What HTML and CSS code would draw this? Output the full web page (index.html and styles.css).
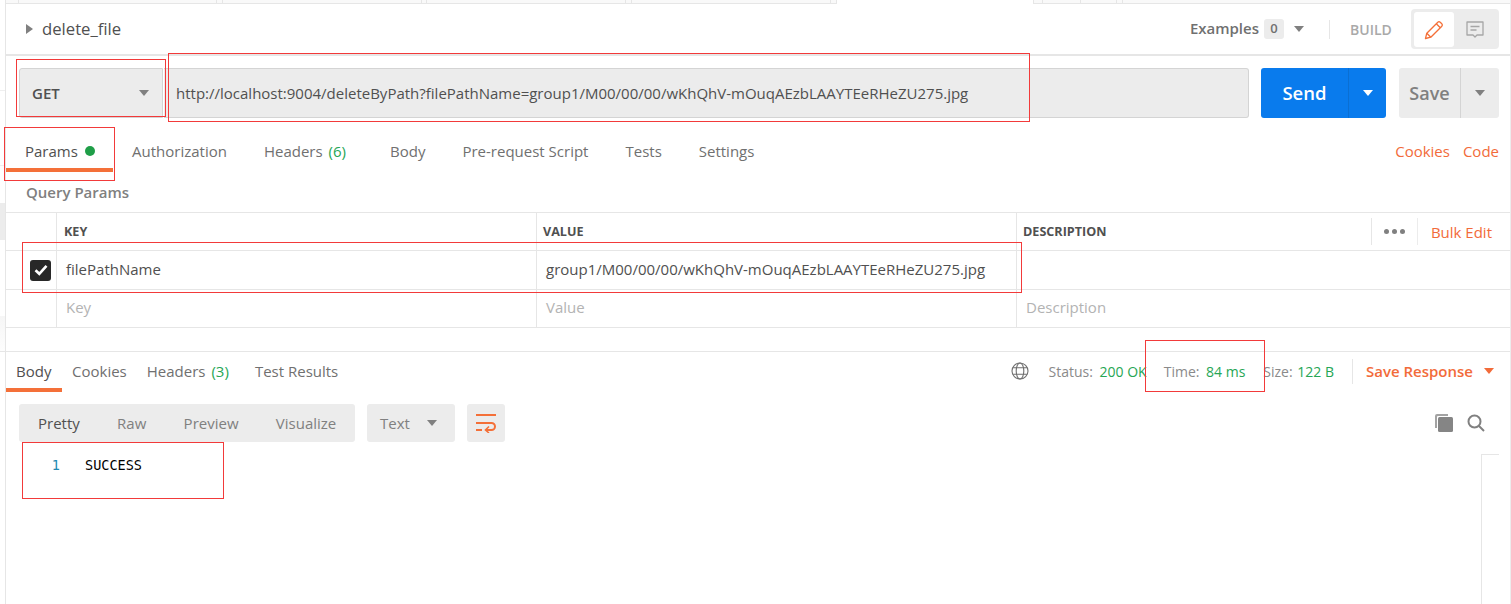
FILE: index.html
```html
<!DOCTYPE html>
<html lang="en">
<head>
<meta charset="utf-8">
<title>delete_file</title>
<link rel="stylesheet" href="styles.css">
</head>
<body>
<div class="app">
  <aside class="rail">
    <div class="rb rb1"></div><div class="rb rb2"></div><div class="rb rb3"></div><div class="rb rb4"></div><div class="rb rb5"></div><div class="rb rb6"></div>
  </aside>
  <main class="main">
    <div class="tabstrip">
      <span class="st"></span><span class="st"></span><span class="st"></span><span class="st"></span><span class="st"></span><span class="st"></span><span class="st"></span><span class="st"></span><span class="st"></span><span class="st st-active"></span><span class="st"></span><span class="st"></span><span class="st"></span><span class="st"></span><span class="st st-end"></span>
    </div>
    <header class="titlebar">
      <div class="title"><svg class="tri-r" width="7" height="10" viewBox="0 0 7 10"><path d="M0 0l7 5-7 5z"/></svg><span class="title-text">delete_file</span></div>
      <div class="title-right">
        <span class="examples">Examples</span><span class="count">0</span>
        <svg class="tri" width="10" height="6" viewBox="0 0 10 6"><path d="M0 0h10L5 6z"/></svg>
        <span class="vsep"></span>
        <span class="build">BUILD</span>
        <div class="modes">
          <span class="mode on"><svg width="20" height="20" viewBox="0 0 20 20" fill="none" stroke="#f47039" stroke-width="1.300" stroke-linejoin="round"><path d="M1.500 18.500l1.300-5.300L13.800 2.200a1.700 1.700 0 0 1 2.400 0l1.600 1.600a1.700 1.700 0 0 1 0 2.400L6.800 17.200z"/><path d="M12.300 3.700l4 4M2.800 13.200l4 4"/></svg></span>
          <span class="mode"><svg width="20" height="20" viewBox="0 0 20 20" fill="none" stroke="#a6a6a6" stroke-width="1.300" stroke-linejoin="round"><path d="M2 2h16v13h-6l-2 2-2-2H2z"/><path d="M5.500 6.500h9M5.500 10h6"/></svg></span>
        </div>
      </div>
    </header>
    <section class="urlbar">
      <div class="method"><span>GET</span><svg class="tri" width="10" height="6" viewBox="0 0 10 6"><path d="M0 0h10L5 6z"/></svg></div>
      <div class="url">http://localhost:9004/deleteByPath?filePathName=group1/M00/00/00/wKhQhV-mOuqAEzbLAAYTEeRHeZU275.jpg</div>
      <div class="send"><span class="send-l">Send</span><span class="send-r"><svg width="10" height="6" viewBox="0 0 10 6"><path fill="#fff" d="M0 0h10L5 6z"/></svg></span></div>
      <div class="save"><span class="save-l">Save</span><span class="save-r"><svg class="tri" width="10" height="6" viewBox="0 0 10 6"><path d="M0 0h10L5 6z"/></svg></span></div>
    </section>
    <nav class="reqtabs">
      <span class="rt rt-params">Params<i class="dot"></i></span>
      <span class="rt rt-auth">Authorization</span>
      <span class="rt rt-head">Headers<b class="g cnt">(6)</b></span>
      <span class="rt rt-body">Body</span>
      <span class="rt rt-pre">Pre-request Script</span>
      <span class="rt rt-tests">Tests</span>
      <span class="rt rt-set">Settings</span>
      <span class="links"><span>Cookies</span><span>Code</span></span>
    </nav>
    <h2 class="qp">Query Params</h2>
    <div class="table">
      <div class="row head">
        <span class="c c0"></span><span class="c c1">KEY</span><span class="c c2">VALUE</span>
        <span class="c c3">DESCRIPTION<span class="tools"><span class="more"><i></i><i></i><i></i></span><span class="bulk">Bulk Edit</span></span></span>
      </div>
      <div class="row body">
        <span class="c c0"><span class="check"><svg width="14" height="12" viewBox="0 0 14 12" fill="none" stroke="#fff" stroke-width="2.600"><path d="M1.500 6.200l3.800 3.600 7.200-8"/></svg></span></span>
        <span class="c c1">filePathName</span><span class="c c2">group1/M00/00/00/wKhQhV-mOuqAEzbLAAYTEeRHeZU275.jpg</span><span class="c c3"></span>
      </div>
      <div class="row body ph">
        <span class="c c0"></span><span class="c c1">Key</span><span class="c c2">Value</span><span class="c c3">Description</span>
      </div>
    </div>
    <div class="resp">
      <nav class="resptabs">
        <span class="pt active">Body</span><span class="pt">Cookies</span><span class="pt">Headers<b class="g cnt">(3)</b></span><span class="pt pt-test">Test Results</span>
        <div class="stats">
          <svg class="globe" width="18" height="18" viewBox="0 0 18 18" fill="none" stroke="#6f6f6f" stroke-width="1.100"><circle cx="9" cy="9" r="8"/><ellipse cx="9" cy="9" rx="3.800" ry="8"/><path d="M1.800 5.800h14.400M1.800 12.200h14.400"/></svg>
          <span class="stat s1">Status: <b class="g">200 OK</b></span>
          <span class="stat s2">Time: <b class="g">84 ms</b></span>
          <span class="stat s3">Size: <b class="g">122 B</b></span>
          <span class="savewrap"><span class="saveresp">Save Response</span><svg width="10" height="6" viewBox="0 0 10 6"><path fill="#f26b3a" d="M0 0h10L5 6z"/></svg></span>
        </div>
      </nav>
      <div class="toolbar">
        <div class="seg"><span class="on">Pretty</span><span>Raw</span><span>Preview</span><span>Visualize</span></div>
        <div class="fmt"><span>Text</span><svg class="tri" width="10" height="6" viewBox="0 0 10 6"><path d="M0 0h10L5 6z"/></svg></div>
        <div class="wrap"><svg width="20" height="20" viewBox="0 0 20 20" fill="none" stroke="#f47039" stroke-width="2"><path d="M0 2h20M0 10h15.500a3.500 3.500 0 0 1 0 7H10M0 17h6"/><path d="M13 13.500l-3.500 3.500 3.500 3" stroke-width="1.600"/></svg></div>
        <div class="tb-icons">
          <svg width="18" height="18" viewBox="0 0 18 18"><path fill="#a3a3a3" d="M2 0h11v2H3a1 1 0 0 0-1 1v11H0V2a2 2 0 0 1 2-2z"/><rect x="3" y="3" width="15" height="15" rx="1.500" fill="#858585"/></svg>
          <svg width="18" height="18" viewBox="0 0 18 18" fill="none" stroke="#808080" stroke-width="2"><circle cx="7.500" cy="7.500" r="6"/><path d="M12 12l5 5"/></svg>
        </div>
      </div>
      <div class="code"><span class="ln">1</span><span class="txt">SUCCESS</span></div>
      <span class="scroll"></span>
    </div>
  </main>
</div>
<span class="red r-method"></span>
<span class="red r-url"></span>
<span class="red r-params"></span>
<span class="red r-row"></span>
<span class="red r-time"></span>
<span class="red r-code"></span>
</body>
</html>
```
FILE: styles.css
```css
* { box-sizing: border-box; }
html, body { margin: 0; height: 100%; overflow: hidden; background: #fff; }
body { font-family: "Open Sans", "Liberation Sans", sans-serif; font-size: 15px; color: #505050; width: 1511px; height: 604px; position: relative; }
b, i { font-weight: inherit; font-style: normal; }
.app { display: flex; height: 604px; }
.rail { width: 6px; flex: none; border-right: 1px solid #e6e6e6; background: #fff; }
.rb1 { height: 91px; border-bottom: 1px solid #efefef; }
.rb2 { height: 75px; border-bottom: 1px solid #efefef; }
.rb3 { height: 37px; }
.rb4 { height: 37px; background: #ececec; }
.rb5 { height: 76px; }
.rb6 { height: 36px; background: linear-gradient(#f6f6f6, #fdfdfd); border-bottom: 1px solid #e6e6e6; }
.main { flex: 1; min-width: 0; display: flex; flex-direction: column; border-right: 1px solid #ececec; }
.tabstrip { height: 4px; flex: none; display: grid; grid-template-columns: 13px 198px 6px 199px 5px 199px 6px 199px 6px 197px 9px 38px 36px 6px 1fr; }
.st { display: block; background: #f9f9f9; border-right: 1px solid #e6e6e6; border-bottom: 1px solid #e6e6e6; }
.st-active { background: #fff; border-bottom: 0; }
.st-end { border-right: 0; }
.titlebar { height: 52px; flex: none; display: flex; align-items: center; justify-content: space-between; padding: 0 11px 0 20px; border-bottom: 2px solid #e6e6e6; }
.title { display: flex; align-items: center; gap: 9px; font-size: 16.700px; color: #505050; }
.title-text { position: relative; top: -1px; }
.tri-r path, .tri path { fill: #808080; }
.title-right { display: flex; align-items: center; }
.examples { color: #707070; font-weight: 600; font-size: 15px; position: relative; top: -1px; }
.count { background: #ececec; border-radius: 3px; width: 20px; height: 20px; margin-left: 5px; text-align: center; line-height: 19px; font-size: 13px; color: #707070; font-weight: 600; }
.title-right .tri { margin-left: 10px; }
.vsep { width: 1px; height: 19px; background: #e6e6e6; margin: 0 20px 0 25px; }
.build { color: #a9a9a9; font-weight: 600; font-size: 14px; width: 41px; margin-right: 20px; }
.modes { display: flex; width: 88px; height: 40px; background: #ececec; border-radius: 4px; padding: 3px; }
.mode { flex: 1; height: 35px; display: flex; align-items: center; justify-content: center; border-radius: 3px; }
.mode.on { flex: none; width: 40px; background: #fff; }
.urlbar { display: flex; padding: 12px 0 0 13px; height: 63px; flex: none; }
.method { flex: none; width: 144px; height: 50px; background: #ececec; border: 1px solid #d4d4d4; border-radius: 3px 0 0 3px; display: flex; align-items: center; justify-content: space-between; padding: 0 13px 0 12px; font-weight: 600; font-size: 15px; }
.url { flex: none; width: 1085px; height: 50px; margin-left: 1px; background: #ececec; border: 1px solid #d4d4d4; border-left: 0; border-radius: 0 3px 3px 0; padding-left: 12px; line-height: 49px; color: #505050; white-space: nowrap; }
.send { flex: none; display: flex; width: 125px; height: 50px; margin-left: 12px; background: #097bed; border-radius: 3px; color: #fff; }
.send-l { width: 88px; text-align: center; line-height: 50px; font-size: 18.500px; font-weight: 600; border-right: 1px solid #0a6fd3; }
.send-r { flex: 1; display: flex; align-items: center; justify-content: center; }
.save { flex: none; display: flex; width: 100px; height: 50px; margin-left: 13px; background: #ececec; border-radius: 3px; color: #808080; }
.save-l { width: 62px; text-align: center; line-height: 50px; font-size: 18px; font-weight: 600; border-right: 1px solid #d4d4d4; }
.save-r { flex: 1; display: flex; align-items: center; justify-content: center; }
.reqtabs { height: 53px; flex: none; display: flex; align-items: flex-start; padding-top: 22px; color: #707070; }
.rt { display: inline-flex; align-items: center; height: 20px; white-space: nowrap; }
.rt-params { width: 107px; height: 53px; margin-top: -22px; padding: 22px 0 7px 19px; color: #505050; border-bottom: 4px solid #f47039; }
.dot { width: 10px; height: 10px; border-radius: 50%; background: #1f9e48; margin-left: 7px; }
.rt-auth { margin-left: 19px; }
.rt-head { margin-left: 37px; }
.cnt { margin-left: 6px; }
.rt-body { margin-left: 44px; }
.rt-pre { margin-left: 37px; }
.rt-tests { margin-left: 37px; }
.rt-set { margin-left: 37px; }
.g { color: #26a655; }
.links { margin-left: auto; display: flex; gap: 13px; height: 20px; align-items: center; color: #f26b3a; padding-right: 11px; }
.qp { margin: 0; height: 40px; flex: none; padding: 10px 0 0 20px; font-size: 15px; font-weight: 600; color: #808080; line-height: 20px; }
.table { flex: none; }
.row { display: flex; border-top: 1px solid #e6e6e6; }
.head { height: 38px; }
.body { height: 39px; }
.ph { border-bottom: 1px solid #e6e6e6; }
.c { display: flex; align-items: center; border-right: 1px solid #e6e6e6; height: 100%; }
.c0 { width: 51px; padding-left: 18px; }
.c1, .c2 { width: 480px; padding: 0 0 2px 9px; }
.c3 { flex: 1; border-right: 0; padding: 0 0 2px 9px; }
.ph .c { padding-bottom: 3px; }
.head .c { font-size: 12.600px; font-weight: 700; color: #505050; padding: 0 0 0 7px; }
.head .c2 { padding-left: 6px; }
.head .c3 { padding-left: 6px; }
.body .c { color: #505050; }
.ph .c { color: #b3b3b3; }
.check { width: 21px; height: 21px; margin-left: 6px; border-radius: 3px; background: #282828; display: flex; align-items: center; justify-content: center; }
.body .c0 { padding-left: 18px; }
.tools { margin-left: auto; display: flex; align-items: center; height: 27px; }
.more { display: flex; gap: 3px; width: 47px; height: 27px; border-left: 1px solid #e6e6e6; border-right: 1px solid #ececec; align-items: center; justify-content: center; }
.more i { width: 5px; height: 5px; border-radius: 50%; background: #808080; display: block; }
.head .bulk { color: #f26b3a; font-size: 15px; font-weight: 400; padding: 0 18px 0 13px; white-space: nowrap; }
.resp { position: relative; flex: 1; margin-top: 23px; border-top: 1px solid #e6e6e6; }
.resptabs { display: flex; height: 40px; color: #707070; }
.pt { height: 40px; display: inline-flex; align-items: flex-start; padding-top: 9px; line-height: 20px; white-space: nowrap; margin-left: 20px; }
.pt.active { margin-left: 0; margin-right: -10px; padding-left: 10px; width: 56px; border-bottom: 4px solid #f47039; color: #505050; }
.pt-test { margin-left: 26px; }
.stats { margin-left: auto; display: flex; align-items: center; height: 100%; padding: 0 16px 2px 0; }
.globe { margin-right: 20px; }
.stat { color: #8a8a8a; font-size: 14px; white-space: nowrap; }
.stat .g { margin-left: 3px; }
.s2 { margin-left: 17px; }
.s3 { margin-left: 18px; }
.s3 .g { margin-left: 1px; }
.savewrap { display: flex; align-items: center; gap: 11px; margin-left: 18px; border-left: 1px solid #e6e6e6; padding-left: 13px; height: 25px; }
.saveresp { color: #f26b3a; font-weight: 600; white-space: nowrap; }
.toolbar { display: flex; align-items: center; height: 38px; margin-top: 12px; padding: 0 25px 0 13px; }
.seg { display: flex; align-items: center; width: 336px; height: 38px; background: #ececec; border-radius: 3px; color: #808080; padding-left: 19px; gap: 37.300px; }
.seg .on { color: #505050; }
.fmt { display: flex; align-items: center; justify-content: space-between; width: 88px; height: 38px; margin-left: 12px; padding: 0 18px 0 13px; background: #ececec; border-radius: 3px; color: #808080; }
.wrap { width: 38px; height: 38px; margin-left: 12px; background: #ececec; border-radius: 3px; display: flex; align-items: center; justify-content: center; }
.tb-icons { margin-left: auto; display: flex; gap: 14px; }
.code { display: flex; font-family: "DejaVu Sans Mono", "Liberation Mono", monospace; font-size: 13.500px; line-height: 18px; margin-top: 14px; color: #000; }
.ln { width: 54px; text-align: right; color: #2389b0; }
.txt { margin-left: 25px; }
.scroll { position: absolute; right: 11px; top: 102px; bottom: 0; width: 18px; border-left: 1px solid #e6e6e6; border-top: 1px solid #e6e6e6; }
.red { position: absolute; border: 1px solid #f23a3a; pointer-events: none; }
.r-method { left: 16px; top: 59px; width: 150px; height: 58px; }
.r-url { left: 168px; top: 53px; width: 862px; height: 69px; }
.r-params { left: 4px; top: 127px; width: 111px; height: 54px; }
.r-row { left: 22px; top: 242px; width: 1000px; height: 51px; }
.r-time { left: 1145px; top: 340px; width: 120px; height: 52px; }
.r-code { left: 22px; top: 442px; width: 202px; height: 57px; }
```
